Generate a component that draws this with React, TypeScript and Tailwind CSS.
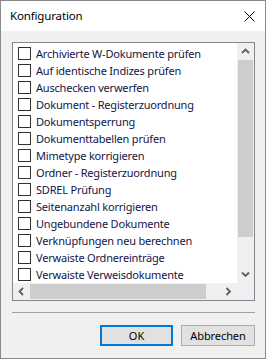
import React from 'react';

const ITEMS = [
  'Archivierte W-Dokumente prüfen',
  'Auf identische Indizes prüfen',
  'Auschecken verwerfen',
  'Dokument - Registerzuordnung',
  'Dokumentsperrung',
  'Dokumenttabellen prüfen',
  'Mimetype korrigieren',
  'Ordner - Registerzuordnung',
  'SDREL Prüfung',
  'Seitenanzahl korrigieren',
  'Ungebundene Dokumente',
  'Verknüpfungen neu berechnen',
  'Verwaiste Ordnereinträge',
  'Verwaiste Verweisdokumente',
];

// small scrollbar arrow, drawn like the win10 glyph
const Arrow = ({ dir }: { dir: 'up' | 'down' | 'left' | 'right' }) => {
  const points = {
    up: '1,5 4.5,1.5 8,5',
    down: '1,1.5 4.5,5 8,1.5',
    left: '5,1 1.5,4.5 5,8',
    right: '1.5,1 5,4.5 1.5,8',
  }[dir];
  const vertical = dir === 'up' || dir === 'down';
  return (
    <svg width={vertical ? 9 : 7} height={vertical ? 7 : 9} viewBox={vertical ? '0 0 9 7' : '0 0 7 9'}>
      <polyline points={points} fill="none" stroke="#606060" strokeWidth="1.8" />
    </svg>
  );
};

const App: React.FC = () => {
  return (
    <div
      className="w-[266px] h-[359px] border border-[#8a8a8a] bg-[#f0f0f0] flex flex-col overflow-hidden"
      style={{ fontFamily: '"Noto Sans", "Segoe UI", sans-serif' }}
    >
      {/* Title bar */}
      <div className="h-[30px] bg-white flex items-center justify-between pl-[9px] pr-[10px] shrink-0">
        <span className="text-[11.5px] tracking-[-0.15px] text-black">Konfiguration</span>
        <svg width="11" height="11" viewBox="0 0 11 11">
          <path d="M0.5 0.5 L10.5 10.5 M10.5 0.5 L0.5 10.5" stroke="#000" strokeWidth="1" />
        </svg>
      </div>

      {/* List box */}
      <div className="mt-[11px] ml-[11px] w-[243px] h-[259px] border border-[#828790] bg-white grid grid-cols-[224px_17px] grid-rows-[240px_17px]">
        <div className="overflow-hidden pt-[2px]">
          {ITEMS.map((label) => (
            <div key={label} className="h-[17px] flex items-center pl-[5px] whitespace-nowrap">
              <span className="w-[13px] h-[13px] border border-[#333333] bg-white shrink-0" />
              <span className="ml-[5px] text-[11px] tracking-[-0.2px] text-[#151545] leading-none">{label}</span>
            </div>
          ))}
        </div>

        {/* Vertical scrollbar */}
        <div className="bg-[#f0f0f0] flex flex-col">
          <div className="h-[17px] flex items-center justify-center">
            <Arrow dir="up" />
          </div>
          <div className="h-[177px] mx-[1px] bg-[#cdcdcd]" />
          <div className="flex-1" />
          <div className="h-[17px] flex items-center justify-center">
            <Arrow dir="down" />
          </div>
        </div>

        {/* Horizontal scrollbar */}
        <div className="bg-[#f0f0f0] flex">
          <div className="w-[17px] flex items-center justify-center">
            <Arrow dir="left" />
          </div>
          <div className="w-[176px] my-[1px] bg-[#cdcdcd]" />
          <div className="flex-1" />
          <div className="w-[17px] flex items-center justify-center">
            <Arrow dir="right" />
          </div>
        </div>
        <div className="bg-[#f0f0f0]" />
      </div>

      {/* Separator */}
      <div className="mt-[11px] ml-[11px] w-[243px] h-px bg-[#a0a0a0]" />

      {/* Buttons */}
      <div className="mt-[12px] flex pl-[99px] gap-[8px]">
        <button className="w-[73px] h-[21px] border-2 border-[#0078d7] bg-[#e1e1e1] text-[11px] text-black leading-none">
          OK
        </button>
        <button className="w-[74px] h-[21px] border border-[#adadad] bg-[#e1e1e1] text-[11px] tracking-[-0.1px] text-black leading-none">
          Abbrechen
        </button>
      </div>
    </div>
  );
};

export default App;
